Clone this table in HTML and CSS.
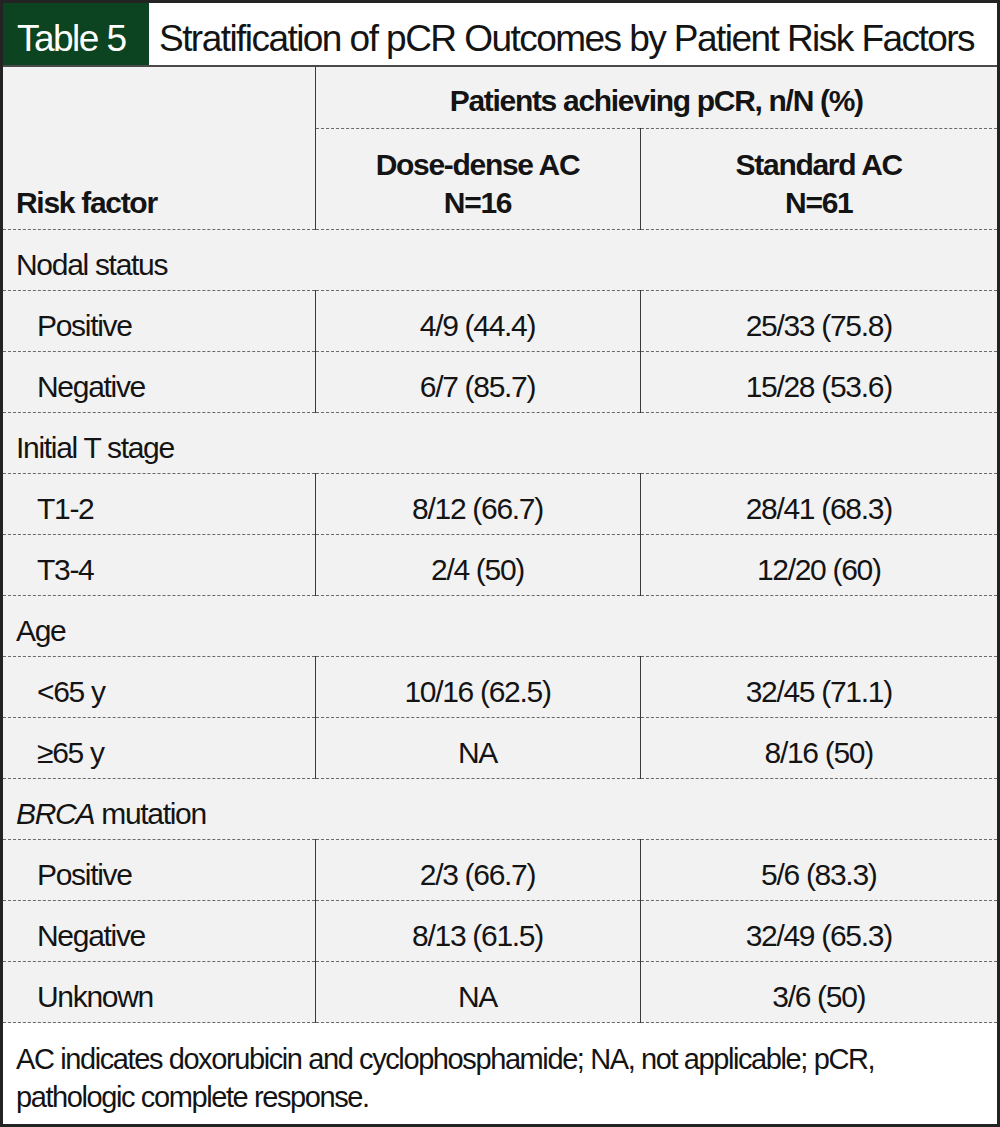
FILE: index.html
```html
<!DOCTYPE html>
<html lang="en">
<head>
<meta charset="utf-8">
<title>Table 5</title>
<link rel="stylesheet" href="styles.css">
</head>
<body>
<div class="frame">
  <div class="titlebar">
    <div class="label">Table 5</div>
    <div class="title">Stratification of pCR Outcomes by Patient Risk Factors</div>
  </div>
  <table class="data">
    <colgroup>
      <col class="c1">
      <col class="c2">
      <col class="c3">
    </colgroup>
    <thead>
      <tr class="h1">
        <th class="rf" rowspan="2">Risk factor</th>
        <th class="span" colspan="2">Patients achieving pCR, n/N (%)</th>
      </tr>
      <tr class="h2">
        <th class="arm">Dose-dense AC<br>N=16</th>
        <th class="arm last">Standard AC<br>N=61</th>
      </tr>
    </thead>
    <tbody>
      <tr class="cat"><td colspan="3">Nodal status</td></tr>
      <tr class="sub"><td>Positive</td><td>4/9 (44.4)</td><td>25/33 (75.8)</td></tr>
      <tr class="sub"><td>Negative</td><td>6/7 (85.7)</td><td>15/28 (53.6)</td></tr>
      <tr class="cat"><td colspan="3">Initial T stage</td></tr>
      <tr class="sub"><td>T1-2</td><td>8/12 (66.7)</td><td>28/41 (68.3)</td></tr>
      <tr class="sub"><td>T3-4</td><td>2/4 (50)</td><td>12/20 (60)</td></tr>
      <tr class="cat"><td colspan="3">Age</td></tr>
      <tr class="sub"><td>&lt;65 y</td><td>10/16 (62.5)</td><td>32/45 (71.1)</td></tr>
      <tr class="sub"><td>≥65 y</td><td>NA</td><td>8/16 (50)</td></tr>
      <tr class="cat"><td colspan="3"><i>BRCA</i> mutation</td></tr>
      <tr class="sub"><td>Positive</td><td>2/3 (66.7)</td><td>5/6 (83.3)</td></tr>
      <tr class="sub"><td>Negative</td><td>8/13 (61.5)</td><td>32/49 (65.3)</td></tr>
      <tr class="sub"><td>Unknown</td><td>NA</td><td>3/6 (50)</td></tr>
    </tbody>
  </table>
  <div class="note">AC indicates doxorubicin and cyclophosphamide; NA, not applicable; pCR, pathologic complete response.</div>
</div>
</body>
</html>
```

FILE: styles.css
```css
html, body {
  margin: 0;
  padding: 0;
  background: #ffffff;
}

.frame {
  box-sizing: border-box;
  width: 1000px;
  height: 1127px;
  border: 3px solid #232323;
  background: #ffffff;
  font-family: "Liberation Sans", Arial, sans-serif;
  color: #141414;
  display: flex;
  flex-direction: column;
}

.titlebar {
  display: flex;
  flex: none;
  height: 64px;
  box-sizing: border-box;
  border-bottom: 2px solid #4a4a4a;
  font-size: 37px;
  letter-spacing: -1.55px;
  line-height: 51px;
  white-space: nowrap;
}

.label {
  width: 146px;
  box-sizing: border-box;
  background: #0c4320;
  color: #ffffff;
  padding: 10px 0 0 14px;
}

.title {
  padding: 10px 0 0 10px;
  color: #141414;
}

.data {
  width: 994px;
  flex: none;
  border-collapse: collapse;
  table-layout: fixed;
  background: #f2f2f2;
  font-size: 30px;
  letter-spacing: -1.3px;
}

.c1 { width: 312px; }
.c2 { width: 325px; }
.c3 { width: 357px; }

.data th {
  font-weight: bold;
  padding: 0;
  box-sizing: border-box;
}

.h1 th.span {
  height: 61px;
  text-align: center;
  vertical-align: top;
  line-height: 33px;
  padding-top: 17px;
  border-bottom: 1px dashed #6a6a6a;
}

.rf {
  text-align: left;
  vertical-align: bottom;
  line-height: 33px;
  padding: 0 0 10px 13px !important;
  border-right: 1px solid #3a3a3a;
  border-bottom: 1px dashed #6a6a6a;
}

.h2 th.arm {
  height: 101px;
  text-align: center;
  vertical-align: top;
  line-height: 38px;
  padding-top: 17px;
  border-bottom: 1px dashed #6a6a6a;
  border-right: 1px solid #3a3a3a;
}

.h2 th.last { border-right: none; }

.data td {
  box-sizing: border-box;
  height: 61px;
  padding: 9px 0 0 0;
  line-height: 33px;
  border-bottom: 1px dashed #6a6a6a;
  vertical-align: middle;
}

.cat td {
  padding-left: 13px;
}

.sub td:first-child {
  padding-left: 34px;
  border-right: 1px solid #3a3a3a;
}

.sub td:nth-child(2) {
  text-align: center;
  border-right: 1px solid #3a3a3a;
}

.sub td:nth-child(3) {
  text-align: center;
}

.note {
  flex: 1;
  font-size: 29px;
  letter-spacing: -1.4px;
  line-height: 38px;
  padding: 17px 20px 0 13px;
}
```
